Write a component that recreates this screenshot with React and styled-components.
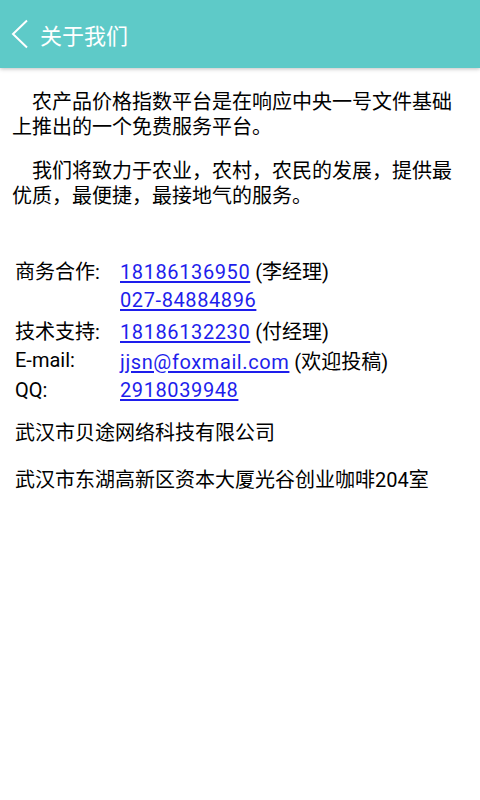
import React from 'react';
import styled, { createGlobalStyle } from 'styled-components';

const GlobalStyle = createGlobalStyle`
  html, body {
    margin: 0;
    padding: 0;
    background: #ffffff;
  }
  body {
    font-family: Roboto, "Noto Sans CJK SC", sans-serif;
    color: #000000;
  }
`;

const Page = styled.div`
  width: 480px;
  min-height: 800px;
  background: #ffffff;
`;

const Header = styled.header`
  height: 68px;
  background: #5ecac8;
  display: flex;
  align-items: center;
  box-shadow: 0 1px 4px rgba(0, 0, 0, 0.25);
`;

const BackButton = styled.button`
  width: 40px;
  height: 68px;
  padding: 0 0 0 11px;
  border: none;
  background: transparent;
  display: flex;
  align-items: center;
`;

const Title = styled.h1`
  margin: 0;
  font-size: 22px;
  font-weight: 400;
  color: #ffffff;
`;

const Content = styled.main`
  padding: 22px 12px 0 12px;
`;

const Paragraph = styled.p`
  margin: 0 0 20px 0;
  font-size: 20px;
  line-height: 24.5px;
  text-indent: 20px;
  color: #000000;
`;

const ContactTable = styled.div`
  margin-top: 47px;
  padding-left: 3px;
  display: grid;
  grid-template-columns: 105px 1fr;
  grid-auto-rows: 30px;
  align-items: center;
  font-size: 20px;
`;

const Label = styled.span`
  color: #000000;
`;

const Value = styled.span`
  color: #000000;
  white-space: nowrap;
`;

const Link = styled.a`
  color: #1e1eec;
  text-decoration: underline;
  text-underline-offset: 2px;
  letter-spacing: 0.6px;
`;

const InfoLine = styled.p`
  margin: ${p => p.$top}px 0 0 3px;
  font-size: 20px;
  line-height: 30px;
  color: #000000;
`;

const BackIcon = () => (
  <svg width="18" height="30" viewBox="0 0 18 30">
    <path d="M16 1.5 L2 15 L16 28.5" fill="none" stroke="#ffffff" strokeWidth="2" />
  </svg>
);

const contacts = [
  { label: '商务合作:', link: '18186136950', note: '(李经理)' },
  { label: '', link: '027-84884896' },
  { label: '技术支持:', link: '18186132230', note: '(付经理)' },
  { label: 'E-mail:', link: 'jjsn@foxmail.com', note: '(欢迎投稿)' },
  { label: 'QQ:', link: '2918039948' },
];

const App = () => (
  <Page>
    <GlobalStyle />
    <Header>
      <BackButton>
        <BackIcon />
      </BackButton>
      <Title>关于我们</Title>
    </Header>
    <Content>
      <Paragraph>农产品价格指数平台是在响应中央一号文件基础上推出的一个免费服务平台。</Paragraph>
      <Paragraph>我们将致力于农业，农村，农民的发展，提供最优质，最便捷，最接地气的服务。</Paragraph>
      <ContactTable>
        {contacts.map((c, i) => (
          <React.Fragment key={i}>
            <Label>{c.label}</Label>
            <Value>
              <Link href="#">{c.link}</Link>
              {c.note && ' ' + c.note}
            </Value>
          </React.Fragment>
        ))}
      </ContactTable>
      <InfoLine $top={13}>武汉市贝途网络科技有限公司</InfoLine>
      <InfoLine $top={17}>武汉市东湖高新区资本大厦光谷创业咖啡204室</InfoLine>
    </Content>
  </Page>
);

export default App;
